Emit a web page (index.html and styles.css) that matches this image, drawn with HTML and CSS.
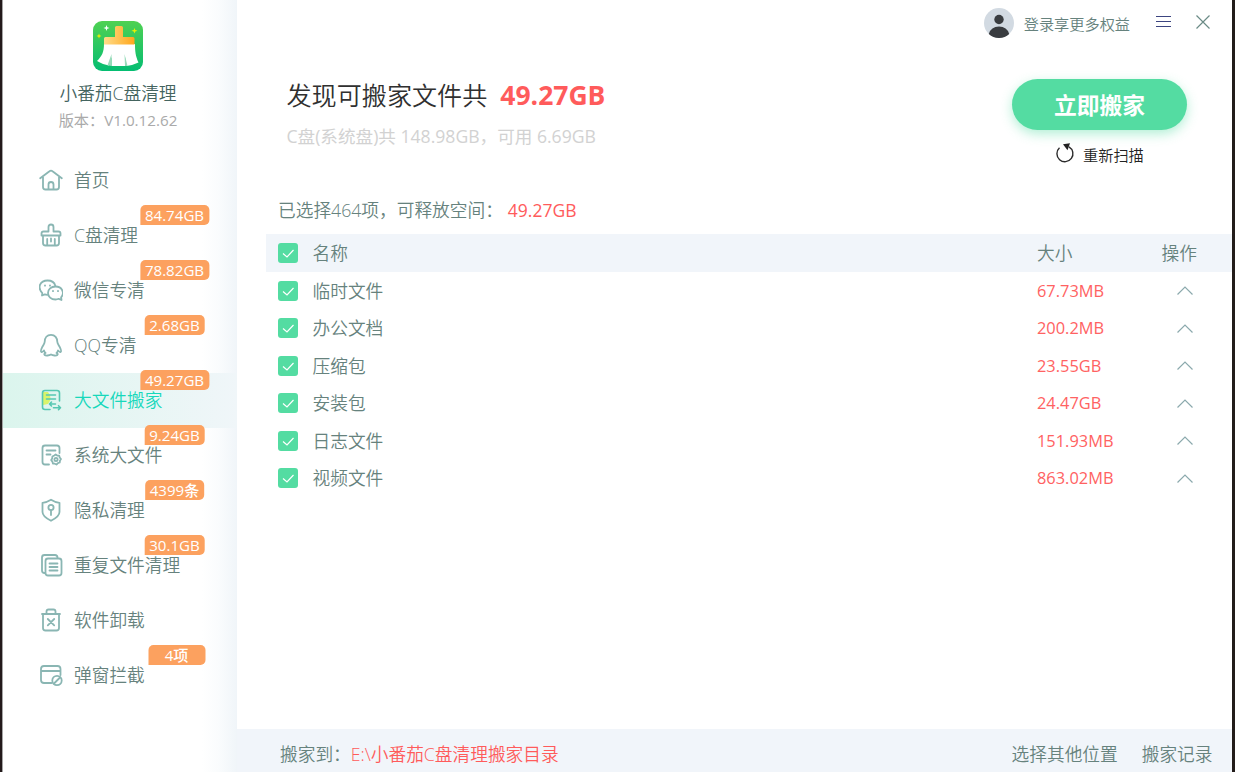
FILE: index.html
```html
<!DOCTYPE html>
<html lang="zh-CN">
<head>
  <meta charset="UTF-8" />
  <title>小番茄C盘清理</title>
  <link rel="stylesheet" href="styles.css">
</head>
<body>
  <div class="window">

    <!-- Sidebar -->
    <aside class="sidebar">
      <svg class="logo" width="50" height="50" viewBox="0 0 50 50">
        <defs>
          <linearGradient id="logo-bg" x1="0" y1="0" x2="0" y2="1">
            <stop offset="0" stop-color="#4fd152"/><stop offset="1" stop-color="#05bd72"/>
          </linearGradient>
          <linearGradient id="logo-handle" x1="0" y1="0" x2="1" y2="0">
            <stop offset="0" stop-color="#ffdc8a"/><stop offset="1" stop-color="#ffa61a"/>
          </linearGradient>
        </defs>
        <rect width="50" height="50" rx="9" fill="url(#logo-bg)"/>
        <path d="M11 23h31c0 7 .5 12 3.500 18.500L39 44l-5.500 1-1.500-9v9H18.500v-9l-2.500 8.500-6-1.500-6-3C9 35 11 31 11 23z" fill="#fff"/>
        <path d="M18.500 33l-4 11.300 4 .7zM31.500 33l.5 12 2.500-.2z" fill="#9adabb"/>
        <path d="M22 16V6.500q0-1.500 1.500-1.500h5q1.500 0 1.500 1.500V16h10q1.500 0 1.500 1.500V23.500H11v-6q0-1.500 1.500-1.500z" fill="url(#logo-handle)"/>
        <path d="M13.500 4l.8 2.200 2.200.8-2.200.8-.8 2.200-.8-2.200-2.200-.8 2.200-.8z" fill="#fff"/>
        <path d="M41.500 7l.8 2 2.200.8-2.200.8-.8 2-.8-2-2.200-.8 2.200-.8zM6 12.500l.7 1.800 1.800.7-1.800.7-.7 1.800-.7-1.800-1.800-.7 1.800-.7z" fill="#e9f000"/>
      </svg>
      <div class="app-name">小番茄C盘清理</div>
      <div class="version">版本：V1.0.12.62</div>

      <nav class="menu">
        <a class="item">
          <svg class="icon" viewBox="0 0 24 24"><path d="M1.200 10.300L10.500 3.200q1.500-1.200 3 0l9.300 7.100M4 9v10q0 2.500 2.500 2.500h11Q20 21.500 20 19V9M9.500 21.500v-5q0-2.500 2.500-2.500t2.500 2.500v5"/></svg>
          <span>首页</span>
        </a>
        <a class="item">
          <svg class="icon" viewBox="0 0 24 24"><path d="M2.500 12.500v-2q0-2 2-2h5V4q0-2.500 2.500-2.500T14.500 4v4.500h5q2 0 2 2v2zM4 12.500V20q0 2.500 2.500 2.500h11q2.500 0 2.500-2.500v-7.500M8.200 16v6M12 15.500v3M15.800 16v6"/></svg>
          <span>C盘清理</span><b class="badge">84.74GB</b>
        </a>
        <a class="item">
          <svg class="icon" viewBox="0 0 24 24"><path d="M8.200 16.800q-1.200 0-2.400-.4L3 17.500l.3-2.500C-2 9.500 1 2.500 8.500 2.500c4 0 7 2 7.800 5.300"/><path d="M16.500 8.500c-4.500 0-7.500 3-7.500 6.500s3 6.500 7.500 6.500q1.800 0 3.200-.7l2.800 1.200-.4-2.600c3.900-4.400 1-10.900-5.600-10.900z"/><path d="M6 7.300v.4M11 7.300v.4M14 12.800v.4M19 12.800v.4"/></svg>
          <span>微信专清</span><b class="badge">78.82GB</b>
        </a>
        <a class="item">
          <svg class="icon" viewBox="0 0 24 24"><path d="M12 1.800c-4 0-6.300 3-6.300 7 0 2-1.600 3.500-2.600 5.500-1.200 2.400-1.500 4.200-.7 4.700.7.500 1.900-.8 2.600-1.500.3 1 .8 1.800 1.500 2.500-1.200.5-1.500 1.200-.8 2 1 .9 4.400.6 6.300-.5 1.900 1.100 5.300 1.400 6.300.5.700-.8.400-1.500-.8-2 .7-.7 1.200-1.500 1.500-2.500.7.700 1.900 2 2.600 1.500.8-.5.500-2.300-.7-4.700-1-2-2.600-3.500-2.600-5.500 0-4-2.300-7-6.300-7z"/></svg>
          <span>QQ专清</span><b class="badge">2.68GB</b>
        </a>
        <a class="item active">
          <svg class="icon" viewBox="0 0 24 24"><path class="glow" d="M4 4h5q5 6 0 12l-5 1z"/><path d="M20.500 13V5q0-2.500-2.500-2.500H6Q3.500 2.500 3.500 5v14q0 2.500 2.500 2.500h5M7.500 7h9M7.500 11h9M16.500 16H10.500M12.500 14L10.500 16l2 2M14.500 19.700H21.500M19.500 17.700l2 2-2 2"/></svg>
          <span>大文件搬家</span><b class="badge">49.27GB</b>
        </a>
        <a class="item">
          <svg class="icon" viewBox="0 0 24 24"><path d="M20.500 10V5q0-2.500-2.500-2.500H6Q3.500 2.500 3.500 5v14q0 2.500 2.500 2.500h4M7.500 7.500h9M7.500 11.500h4"/><path d="M15.200 12.500l1.500-1 1.500 1 2 .2.500 1.800 1.300 1.500-1 1.500-.3 2-1.800.6-1.400 1.400-1.700-.8-1.900-.2-.5-1.900-1.200-1.500 1-1.600.2-2z"/><circle cx="17" cy="16.500" r="1.600"/></svg>
          <span>系统大文件</span><b class="badge">9.24GB</b>
        </a>
        <a class="item">
          <svg class="icon" viewBox="0 0 24 24"><path d="M12 1.700Q16.500 4.500 20.500 4.800V14c0 4-5 7-8.500 8.800C8.500 21 3.500 18 3.500 14V4.800Q7.500 4.500 12 1.700zM12 12v5"/><circle cx="12" cy="9.500" r="2.600"/></svg>
          <span>隐私清理</span><b class="badge">4399条</b>
        </a>
        <a class="item">
          <svg class="icon" viewBox="0 0 24 24"><path d="M18.500 4.500q0-2.500-2.500-2.500H5.500Q3 2 3 4.500v13Q3 20 5.500 20M9 5.500h11q2.500 0 2.500 2.500v12q0 2.500-2.500 2.500H9Q6.500 22.500 6.500 20V8Q6.500 5.500 9 5.500zM10.500 10.500h8M10.500 14h8M10.500 17.500h8"/></svg>
          <span>重复文件清理</span><b class="badge">30.1GB</b>
        </a>
        <a class="item">
          <svg class="icon" viewBox="0 0 24 24"><path d="M3 6h18M4 6v14q0 2.500 2.500 2.500h11Q20 22.500 20 20V6M7.500 6V3.500Q7.500 1.500 9.500 1.500h5q2 0 2 2V6M8.800 11l6.400 6.400M15.200 11l-6.400 6.400"/></svg>
          <span>软件卸载</span>
        </a>
        <a class="item">
          <svg class="icon" viewBox="0 0 24 24"><path d="M12.500 20H5Q2 20 2 17V6Q2 3 5 3h13.500q3 0 3 3v6M2 8h19.500"/><circle cx="18" cy="17.500" r="4.700"/><path d="M15 20.500l6-6"/></svg>
          <span>弹窗拦截</span><b class="badge wide">4项</b>
        </a>
      </nav>
    </aside>

    <!-- Main area -->
    <main class="main">
      <header class="topbar">
        <svg class="avatar" width="30" height="30" viewBox="0 0 30 30"><circle cx="15" cy="15" r="15" fill="#d2dae2"/><circle cx="15" cy="11.500" r="4.700" fill="#393c40"/><path d="M4.800 26q2.200-7.500 10.200-7.500T25.200 26a15 15 0 0 1-20.400 0z" fill="#393c40"/></svg>
        <span class="login">登录享更多权益</span>
        <svg class="menu-btn" width="15" height="14" viewBox="0 0 15 14"><path d="M0 1.500h15M0 6.500h15M0 11.500h15" stroke="#3c4580" stroke-width="1.200"/></svg>
        <svg class="close-btn" width="14" height="14" viewBox="0 0 14 14"><path d="M.5.500l13 13M13.500.500l-13 13" stroke="#6b8b86" stroke-width="1.200"/></svg>
      </header>

      <section class="summary">
        <div class="summary-text">
          <h1>发现可搬家文件共<strong>49.27GB</strong></h1>
          <p>C盘(系统盘)共 148.98GB，可用 6.69GB</p>
        </div>
        <div class="actions">
          <button class="move-btn">立即搬家</button>
          <div class="rescan">
            <svg width="20" height="20" viewBox="0 0 20 20"><path d="M4.500 4.800a8 8 0 1 0 9.500-1" fill="none" stroke="#2b2b2b" stroke-width="1.400"/><path d="M8 1.200L15 .2l-2.500 7z" fill="#222"/></svg>
            <span>重新扫描</span>
          </div>
        </div>
      </section>

      <div class="selected">已选择464项，可释放空间：<span>49.27GB</span></div>

      <div class="table">
        <div class="row head"><i class="check"><svg viewBox="0 0 20 20"><path d="M5 10.500l4 3.500 6.500-7"/></svg></i><span class="name">名称</span><span class="size">大小</span><span class="op">操作</span></div>
        <div class="row"><i class="check"><svg viewBox="0 0 20 20"><path d="M5 10.500l4 3.500 6.500-7"/></svg></i><span class="name">临时文件</span><span class="size">67.73MB</span><svg class="arrow" viewBox="0 0 16 9"><path d="M.5 8.500L8 1l7.500 7.500"/></svg></div>
        <div class="row"><i class="check"><svg viewBox="0 0 20 20"><path d="M5 10.500l4 3.500 6.500-7"/></svg></i><span class="name">办公文档</span><span class="size">200.2MB</span><svg class="arrow" viewBox="0 0 16 9"><path d="M.5 8.500L8 1l7.500 7.500"/></svg></div>
        <div class="row"><i class="check"><svg viewBox="0 0 20 20"><path d="M5 10.500l4 3.500 6.500-7"/></svg></i><span class="name">压缩包</span><span class="size">23.55GB</span><svg class="arrow" viewBox="0 0 16 9"><path d="M.5 8.500L8 1l7.500 7.500"/></svg></div>
        <div class="row"><i class="check"><svg viewBox="0 0 20 20"><path d="M5 10.500l4 3.500 6.500-7"/></svg></i><span class="name">安装包</span><span class="size">24.47GB</span><svg class="arrow" viewBox="0 0 16 9"><path d="M.5 8.500L8 1l7.500 7.500"/></svg></div>
        <div class="row"><i class="check"><svg viewBox="0 0 20 20"><path d="M5 10.500l4 3.500 6.500-7"/></svg></i><span class="name">日志文件</span><span class="size">151.93MB</span><svg class="arrow" viewBox="0 0 16 9"><path d="M.5 8.500L8 1l7.500 7.500"/></svg></div>
        <div class="row"><i class="check"><svg viewBox="0 0 20 20"><path d="M5 10.500l4 3.500 6.500-7"/></svg></i><span class="name">视频文件</span><span class="size">863.02MB</span><svg class="arrow" viewBox="0 0 16 9"><path d="M.5 8.500L8 1l7.500 7.500"/></svg></div>
      </div>

      <footer class="footer">
        <span>搬家到：</span><span class="path">E:\小番茄C盘清理搬家目录</span>
        <span class="other">选择其他位置</span><span>搬家记录</span>
      </footer>
    </main>

  </div>
</body>
</html>
```

FILE: styles.css
```css
* {
  box-sizing: border-box;
}
body {
  margin: 0;
  font-family: "Open Sans", "Noto Sans CJK SC", sans-serif;
  font-size: 17.7px;
  font-weight: 350;
  color: #66827d;
  background: #fff;
  white-space: nowrap;
}
.window {
  display: flex;
  width: 1235px;
  height: 772px;
  overflow: hidden;
  border-left: 2px solid #231a1b;
  border-right: 3px solid #221c1a;
}

/* sidebar */
.sidebar {
  display: flex;
  flex-direction: column;
  align-items: center;
  width: 235px;
  padding-top: 21px;
  border-left: 1px solid #a5a5a5;
  background: linear-gradient(to right, #fff 85%, #fafcfd 92%, #f0f5f9 100%);
}
.logo {
  display: block;
  margin-right: 4px;
}
.app-name {
  height: 30px;
  margin-top: 7px;
  margin-right: 4px;
  line-height: 30px;
  font-size: 17.7px;
  color: #44645f;
}
.version {
  height: 24px;
  margin-right: 4px;
  line-height: 24px;
  font-size: 15.2px;
  font-weight: 400;
  color: #aaa;
}
.menu {
  width: 100%;
  margin-top: 21px;
}
.item {
  display: flex;
  position: relative;
  align-items: center;
  height: 55px;
  padding-left: 35.5px;
  gap: 11.5px;
}
.item span {
  margin-bottom: 3px;
}
.item.active {
  background: linear-gradient(to right, #dbf5ed, #f0f6f9);
  color: #17d8bb;
}
.icon {
  width: 24px;
  height: 24px;
  margin-bottom: 1px;
  fill: none;
  stroke: #8ab6b3;
  stroke-width: 1.8;
  stroke-linecap: round;
  stroke-linejoin: round;
}
.active .icon {
  stroke: #55c7b2;
  stroke-width: 1.6;
}
.icon .glow {
  fill: #d9f46b;
  stroke: none;
}
.badge {
  position: absolute;
  top: -3px;
  left: 171.5px;
  height: 20px;
  padding: 0 5px;
  border-radius: 5px 5px 5px 0;
  line-height: 20px;
  font-size: 15.1px;
  font-weight: 450;
  color: #fff;
  background: #fca15f;
  transform: translateX(-50%);
}
.badge.wide {
  left: 173.5px;
  width: 57px;
  text-align: center;
}

/* main area */
.main {
  display: flex;
  flex: 1;
  flex-direction: column;
}
.topbar {
  display: flex;
  align-items: center;
  justify-content: flex-end;
  height: 46px;
  padding-right: 22px;
}
.login {
  margin: 0 26px 0 10px;
  font-size: 15.2px;
}
.menu-btn {
  margin-right: 25px;
}
.menu-btn, .close-btn {
  margin-bottom: 2px;
}
.summary {
  display: flex;
  justify-content: space-between;
  height: 145px;
  padding: 29px 45px 0 49.5px;
}
h1 {
  height: 40px;
  margin: 0;
  line-height: 41px;
  font-size: 25.1px;
  font-weight: 350;
  color: #303030;
}
h1 strong {
  margin-left: 13px;
  font-size: 26.5px;
  font-weight: 700;
  color: #ff5b5b;
}
.summary p {
  margin: 6px 0 0;
  line-height: 30px;
  font-size: 17.6px;
  font-weight: 400;
  color: #d2d2d2;
}
.actions {
  padding-top: 4px;
}
.move-btn {
  display: block;
  width: 175px;
  height: 51px;
  border: 0;
  border-radius: 26px;
  font-family: inherit;
  font-size: 22.8px;
  font-weight: 700;
  color: #fff;
  background: #54dca2;
  box-shadow: 0 4px 12px rgba(84, 220, 162, 0.45);
}
.rescan {
  display: flex;
  align-items: center;
  height: 24px;
  margin-top: 12px;
  padding-left: 43px;
  gap: 8px;
  font-size: 15.2px;
  color: #222;
}
.rescan svg {
  margin-bottom: 2px;
}
.selected {
  height: 43px;
  padding-left: 41px;
  line-height: 38px;
}
.selected span {
  margin-left: 5px;
  font-size: 17.5px;
  font-weight: 400;
  color: #ff5b5b;
}
.row {
  display: grid;
  grid-template-columns: 34.5px 724.5px 124.5px 60px;
  align-items: center;
  height: 37.5px;
  margin-left: 29px;
  padding-left: 12px;
}
.row.head {
  height: 38px;
  background: #f1f5fa;
}
.row span {
  margin-bottom: 2px;
}
.row .size {
  margin-bottom: 1px;
  font-size: 16.4px;
  font-weight: 400;
  color: #ff6262;
}
.row.head .size {
  margin-bottom: 2px;
  font-size: 17.7px;
  font-weight: 350;
  color: inherit;
}
.check {
  width: 20px;
  height: 20px;
  border-radius: 3px;
  background: #54dca2;
}
.check svg {
  display: block;
  fill: none;
  stroke: #fff;
  stroke-width: 1.2;
}
.arrow {
  width: 16px;
  height: 9px;
  margin-left: 15px;
  fill: none;
  stroke: #8ba9ad;
  stroke-width: 1.2;
}
.footer {
  display: flex;
  align-items: center;
  height: 43px;
  margin-top: auto;
  padding: 5px 19.5px 0 43px;
  background: #f1f5fa;
}
.footer .path {
  color: #ff5b5b;
}
.footer .other {
  margin-left: auto;
  margin-right: 24px;
}
```
